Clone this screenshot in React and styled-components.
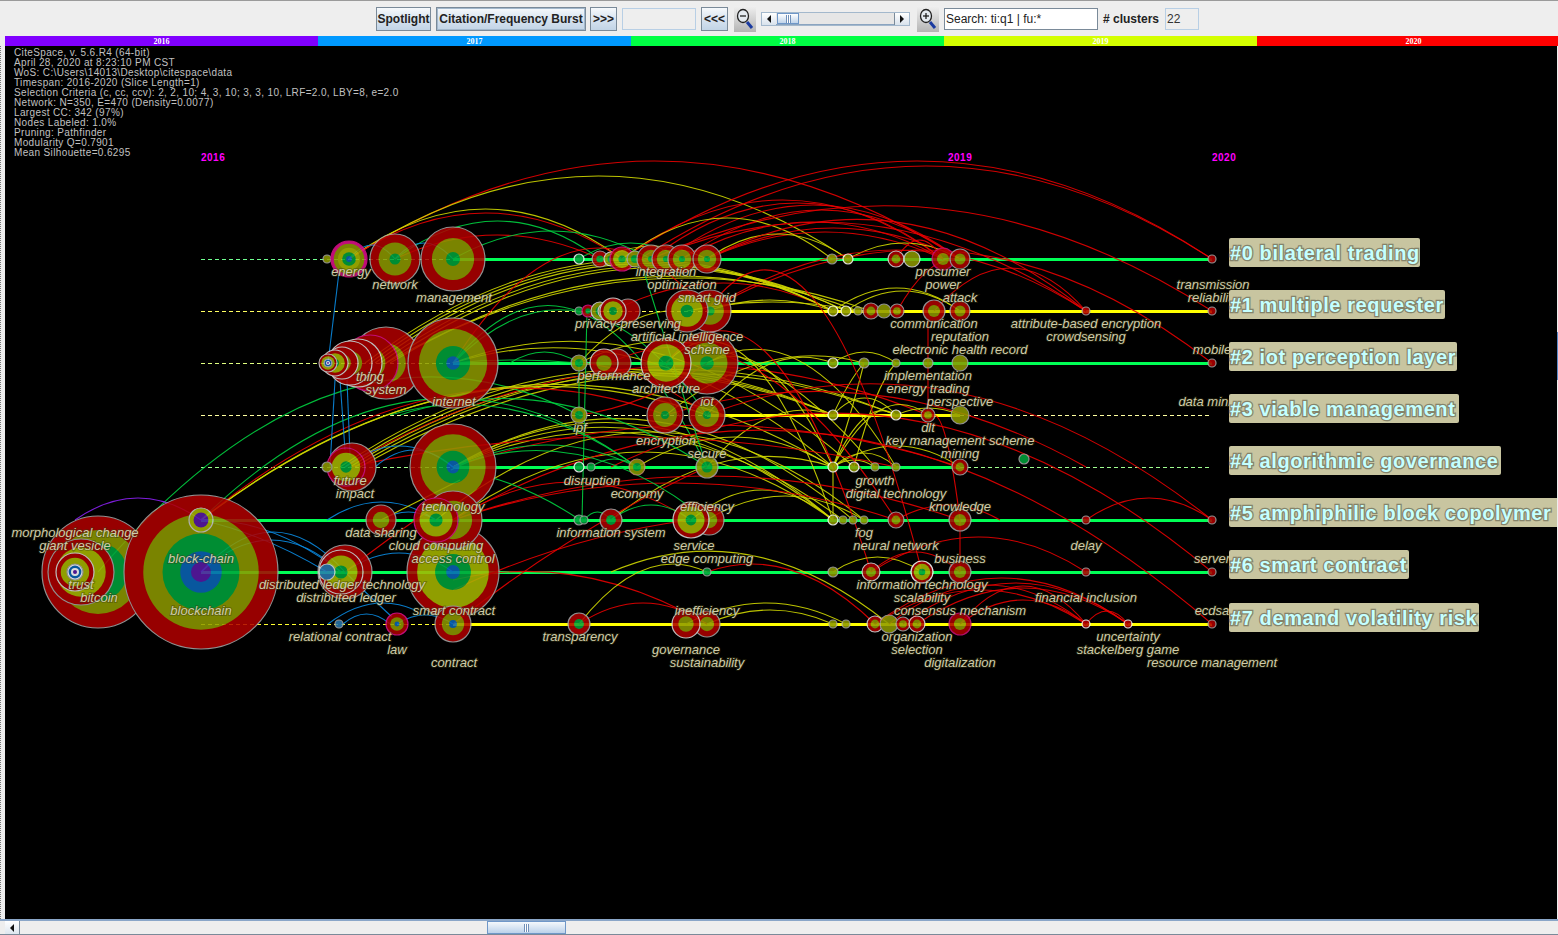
import React from 'react';
import styled, { createGlobalStyle } from 'styled-components';

const R = '#b00000', O = '#8f9a00', Y = '#a8b800', G = '#00a53c', B = '#0a66b8', P = '#5a1aa8', M = '#e0108c';
const RED = '#e80000', YEL = '#d0d800', GRN = '#00d040', BLU = '#0a8ae0';

const RINGS = {
  big: [[1, R], [0.78, Y], [0.39, G], [0.15, B]],
  bigo: [[1, R], [0.76, O], [0.38, G], [0.15, B]],
  rog: [[1, R], [0.66, O], [0.22, G]],
  rob: [[1, R], [0.62, O], [0.22, B]],
  ro: [[1, R], [0.55, O]],
  rg: [[1, R], [0.45, G]],
  ry: [[1, R], [0.75, Y], [0.3, G]],
  tr: [[1, R], [0.75, O], [0.52, G]],
  ol: [[1, O]],
  og: [[1, O], [0.5, G]],
  gr: [[1, G]],
  rd: [[1, R]],
  mag: [[1, M], [0.85, O], [0.62, Y], [0.38, G], [0.16, B]],
  chain: [[1, R], [0.75, O], [0.5, G], [0.27, B], [0.13, P]],
  pur: [[1, Y], [0.62, P]],
  blu: [[1, '#2a7ab0']],
  tiny: [[1, '#fff'], [0.8, B], [0.5, '#fff'], [0.25, P]],
};

// x, y, r, rings, border
const NODES = [
  [98, 572, 56, 'tr'], [81, 572, 33, 'ry'], [75, 572, 19, 'ry', '#ddd'], [75, 572, 8, 'tiny'],
  [201, 572, 77, 'chain'], [201, 520, 12, 'pur', '#ccc'],
  [345, 572, 27, 'ro'], [341, 572, 22, 'ry', '#ddd'], [327, 572, 8, 'blu', '#ddd'],
  [453, 572, 46, 'big'], [707, 572, 4, 'gr'], [833, 572, 5, 'ol'], [871, 572, 9, 'ro', '#ddd'],
  [922, 572, 11, 'ry', '#fff'], [960, 572, 11, 'ro'], [1086, 572, 4, 'rd'], [1212, 572, 4, 'rd'],
  [327, 259, 4, 'ol'], [395, 259, 25, 'rog'], [453, 259, 32, 'rog'], [349, 259, 18, 'mag', M],
  [579, 259, 5, 'gr', '#fff'], [600, 259, 8, 'rg'], [611, 259, 7, 'og', '#ddd'], [622, 259, 12, 'ry', M],
  [635, 259, 8, 'og'], [651, 259, 14, 'rog'], [666, 259, 14, 'rog'], [682, 259, 14, 'rog'], [707, 259, 14, 'rog'],
  [832, 259, 5, 'ol'], [848, 259, 5, 'ol', '#fff'], [896, 259, 8, 'ro', '#ddd'], [912, 259, 8, 'ol', '#ddd'],
  [943, 259, 11, 'ro', '#d0107a'], [960, 259, 10, 'ro'], [1212, 259, 4, 'rd'],
  [579, 311, 4, 'gr'], [588, 311, 6, 'rg', M], [600, 311, 9, 'og', '#ddd'], [606, 311, 8, 'og', '#ddd'],
  [628, 311, 12, 'rd'], [613, 311, 13, 'ry', '#ddd'], [710, 311, 21, 'rog'], [687, 311, 21, 'ry'],
  [833, 311, 5, 'ol', '#fff'], [846, 311, 5, 'ol', '#fff'], [858, 311, 4, 'ol'], [871, 311, 8, 'ro'],
  [884, 311, 7, 'ol'], [897, 311, 7, 'ro'], [934, 311, 11, 'ro'], [960, 311, 10, 'ro'], [1086, 311, 4, 'rd'], [1212, 311, 4, 'rd'],
  [386, 363, 36, 'ro'], [370, 363, 28, 'ro', M], [358, 363, 24, 'ro', '#ddd'], [350, 363, 22, 'ro', '#ddd'],
  [342, 363, 16, 'ro', '#ddd'], [335, 363, 13, 'ry', '#ddd'], [328, 363, 9, 'ry', '#ccc'], [328, 363, 4, 'tiny'],
  [453, 363, 45, 'bigo'], [579, 363, 8, 'og'], [617, 363, 14, 'rd'], [604, 363, 14, 'ro', '#ddd'],
  [707, 363, 31, 'rog'], [666, 363, 25, 'ry', '#ddd'], [833, 363, 5, 'ol', '#fff'], [864, 363, 5, 'ol'],
  [896, 363, 4, 'ol'], [928, 363, 5, 'ol'], [960, 363, 8, 'ol'], [1212, 363, 4, 'rd'],
  [579, 415, 8, 'og'], [665, 415, 18, 'rog'], [707, 415, 18, 'rog'], [833, 415, 5, 'ol', '#fff'],
  [896, 415, 5, 'ol', '#fff'], [928, 415, 7, 'ro'], [960, 415, 9, 'ol'],
  [352, 467, 24, 'ro'], [346, 467, 19, 'ry', M], [327, 467, 5, 'ol'], [453, 467, 43, 'bigo'],
  [579, 467, 5, 'gr', '#fff'], [591, 467, 4, 'gr'], [637, 467, 8, 'og', '#c89070'], [707, 467, 11, 'og'],
  [833, 467, 5, 'ol', '#fff'], [854, 467, 5, 'ol', '#fff'], [875, 467, 4, 'ol'], [896, 467, 4, 'ol'], [960, 467, 8, 'ro'],
  [1024, 459, 5, 'gr'],
  [381, 520, 15, 'ro'], [453, 520, 29, 'rog'], [436, 520, 22, 'ry', M],
  [579, 520, 5, 'gr'], [584, 520, 4, 'gr'], [611, 520, 11, 'rg'], [709, 520, 15, 'ro'], [691, 520, 18, 'ry', '#ddd'],
  [833, 520, 5, 'ol', '#fff'], [843, 520, 4, 'ol'], [853, 520, 4, 'ol'], [864, 520, 4, 'ol'], [896, 520, 8, 'ro'],
  [960, 520, 11, 'ro'], [1086, 520, 4, 'rd'], [1212, 520, 4, 'rd'],
  [339, 624, 4, 'blu'], [397, 624, 11, 'rob', M], [453, 624, 18, 'rob'], [579, 624, 11, 'rg'],
  [707, 624, 13, 'ro'], [686, 624, 14, 'ro', '#ddd'], [833, 624, 4, 'ol'], [846, 624, 4, 'ol'], [875, 624, 8, 'ro', '#ddd'],
  [889, 624, 9, 'ol'], [903, 624, 7, 'ro'], [917, 624, 8, 'ro', '#ddd'], [960, 624, 11, 'ro', '#d0107a'],
  [1086, 624, 4, 'rd', '#fff'], [1128, 624, 4, 'rd', '#fff'], [1212, 624, 4, 'rd'],
];

// from x, from y, to x, to y, peak y, colour
const EDGES = [
  [349, 259, 960, 259, 161, RED], [349, 259, 848, 259, 176, YEL], [622, 259, 1212, 259, 161, RED],
  [640, 259, 1212, 259, 166, RED], [651, 259, 1212, 311, 208, RED], [622, 259, 943, 259, 200, RED],
  [651, 259, 943, 259, 203, RED], [666, 259, 960, 259, 205, RED], [682, 259, 960, 259, 210, RED],
  [707, 259, 960, 259, 228, RED], [707, 259, 943, 259, 232, RED], [682, 259, 943, 259, 222, RED],
  [622, 259, 832, 259, 218, YEL], [707, 259, 848, 259, 234, YEL], [848, 259, 960, 259, 243, YEL],
  [349, 259, 622, 259, 209, YEL], [349, 259, 622, 259, 213, RED], [395, 259, 600, 259, 221, GRN],
  [395, 259, 600, 259, 235, RED], [453, 259, 651, 259, 231, GRN], [349, 259, 395, 259, 245, BLU],
  [395, 259, 453, 259, 243, BLU], [579, 259, 682, 259, 243, GRN], [600, 259, 707, 259, 246, YEL],
  [707, 259, 1086, 311, 222, RED], [651, 259, 1086, 311, 225, RED], [896, 259, 943, 259, 240, RED],
  [707, 311, 1086, 311, 250, RED], [707, 311, 1212, 363, 252, RED], [934, 311, 1086, 311, 268, RED],
  [833, 311, 960, 311, 288, YEL], [846, 311, 960, 311, 291, YEL], [897, 311, 960, 259, 270, RED],
  [707, 311, 833, 311, 300, YEL], [687, 311, 858, 311, 302, YEL], [613, 311, 833, 311, 283, RED],
  [365, 363, 833, 311, 262, YEL], [370, 363, 833, 311, 264, YEL], [375, 363, 833, 311, 266, YEL],
  [380, 363, 846, 311, 268, YEL], [386, 363, 846, 311, 270, YEL], [390, 363, 858, 311, 279, YEL],
  [386, 363, 871, 311, 281, YEL], [453, 363, 707, 311, 250, RED],
  [453, 363, 707, 415, 312, GRN], [510, 363, 579, 363, 352, GRN], [453, 363, 707, 467, 312, GRN],
  [340, 467, 833, 415, 372, YEL], [345, 467, 833, 415, 375, YEL], [350, 467, 833, 415, 378, YEL],
  [355, 467, 896, 415, 372, YEL], [360, 467, 896, 415, 376, YEL], [345, 467, 928, 415, 368, RED],
  [98, 572, 579, 415, 392, GRN], [201, 520, 833, 467, 386, YEL], [201, 520, 666, 415, 398, RED],
  [201, 520, 707, 415, 396, YEL], [201, 520, 637, 467, 400, GRN],
  [453, 467, 833, 520, 425, YEL], [453, 467, 833, 520, 430, YEL], [453, 467, 843, 520, 435, YEL],
  [453, 467, 853, 520, 421, YEL], [436, 520, 864, 520, 432, YEL], [453, 520, 833, 520, 452, YEL],
  [453, 363, 833, 467, 360, YEL], [453, 363, 854, 467, 352, YEL], [579, 363, 875, 467, 352, YEL],
  [707, 363, 896, 467, 362, YEL], [666, 363, 833, 520, 360, YEL], [707, 363, 833, 467, 372, YEL],
  [707, 415, 833, 363, 364, YEL], [666, 415, 864, 363, 362, YEL], [579, 363, 666, 311, 326, YEL],
  [637, 467, 833, 467, 437, YEL], [611, 520, 833, 467, 462, YEL], [707, 467, 833, 415, 417, YEL],
  [691, 520, 833, 520, 490, YEL], [707, 520, 864, 520, 496, YEL], [579, 363, 707, 415, 378, RED],
  [833, 467, 960, 467, 446, YEL], [833, 520, 833, 467, 490, YEL], [833, 467, 896, 415, 418, YEL],
  [833, 467, 928, 415, 410, YEL], [896, 415, 960, 415, 408, YEL], [833, 415, 896, 415, 398, YEL],
  [833, 467, 875, 467, 460, YEL], [833, 467, 896, 467, 453, YEL], [833, 363, 896, 363, 352, YEL],
  [833, 415, 864, 363, 385, YEL], [833, 467, 864, 363, 420, YEL], [854, 467, 896, 363, 400, YEL],
  [707, 415, 1212, 520, 393, RED], [611, 467, 1212, 572, 420, RED], [453, 520, 1212, 624, 435, RED],
  [666, 415, 1086, 467, 395, RED], [453, 467, 960, 467, 425, RED], [579, 415, 707, 363, 398, RED],
  [933, 415, 960, 520, 440, RED], [960, 520, 960, 572, 540, RED], [707, 311, 922, 572, 300, RED],
  [666, 363, 871, 572, 355, RED], [610, 363, 896, 520, 368, RED], [928, 320, 928, 415, 360, RED],
  [349, 467, 896, 467, 437, RED], [453, 520, 960, 520, 476, RED], [453, 520, 896, 520, 483, RED],
  [453, 520, 691, 520, 482, RED], [453, 590, 691, 520, 545, RED], [453, 624, 707, 467, 535, RED],
  [453, 580, 707, 624, 576, RED], [579, 624, 707, 624, 603, RED], [579, 624, 707, 572, 570, YEL],
  [707, 624, 833, 624, 610, YEL], [686, 624, 846, 624, 603, YEL], [611, 572, 889, 624, 555, YEL],
  [707, 572, 875, 624, 570, RED], [875, 624, 1086, 624, 590, RED], [889, 624, 1086, 624, 585, RED],
  [903, 624, 1128, 624, 583, RED], [917, 624, 1128, 624, 588, RED], [875, 624, 1128, 624, 578, RED],
  [960, 624, 1086, 624, 600, RED], [1086, 624, 1128, 624, 611, RED], [1086, 520, 1212, 520, 498, RED],
  [871, 572, 1086, 572, 537, RED], [896, 520, 1000, 520, 505, RED], [833, 572, 922, 572, 557, YEL],
  [871, 572, 960, 572, 552, RED], [960, 624, 1086, 624, 586, RED],
  [451, 470, 637, 467, 445, GRN], [390, 415, 637, 467, 410, GRN], [453, 467, 707, 520, 455, GRN],
  [493, 478, 580, 520, 495, GRN], [591, 467, 637, 467, 459, GRN], [584, 520, 611, 520, 512, GRN],
  [611, 520, 691, 520, 505, GRN], [400, 415, 707, 467, 403, GRN], [453, 363, 579, 363, 360, GRN],
  [587, 311, 582, 520, 415, GRN], [640, 259, 707, 467, 365, GRN], [579, 415, 579, 363, 389, GRN],
  [75, 520, 201, 520, 498, '#8a20f0'],
  [339, 272, 328, 363, 318, BLU], [335, 380, 330, 467, 423, BLU], [340, 380, 345, 450, 415, BLU],
  [347, 380, 350, 455, 417, BLU], [201, 572, 345, 572, 532, BLU], [201, 520, 327, 572, 540, BLU],
  [201, 572, 341, 572, 540, BLU], [201, 520, 341, 572, 532, BLU], [327, 520, 436, 520, 502, BLU],
  [381, 520, 436, 520, 512, BLU], [345, 467, 453, 467, 446, BLU], [375, 467, 453, 467, 450, BLU],
  [345, 572, 453, 572, 553, BLU], [328, 624, 415, 610, 604, BLU], [343, 624, 390, 624, 614, BLU],
  [345, 572, 392, 617, 595, BLU], [397, 624, 453, 624, 615, BLU],
  [381, 520, 460, 480, 500, YEL], [345, 572, 430, 510, 540, RED],
];

const ROWS = [
  { y: 259, color: '#00ff55', from: 453, to: 1212, dash: '#70ff90' },
  { y: 311, color: '#ffff00', from: 707, to: 1212, dash: '#ffff60' },
  { y: 363, color: '#00ff55', from: 453, to: 1212, dash: '#e0ff80' },
  { y: 415, color: '#ffff00', from: 707, to: 960, dash: '#ffffa0' },
  { y: 467, color: '#00ff55', from: 453, to: 960, dash: '#a0ff90' },
  { y: 520, color: '#00ff55', from: 201, to: 1212, dash: '#a0ff90' },
  { y: 572, color: '#00ff55', from: 201, to: 1212, dash: '#a0ff90' },
  { y: 624, color: '#ffff00', from: 453, to: 1212, dash: '#ffff30' },
];

const LABELS = [
  ['energy', 351, 276], ['network', 395, 289], ['management', 454, 302], ['integration', 666, 276], ['optimization', 682, 289],
  ['smart grid', 707, 302], ['prosumer', 943, 276], ['power', 943, 289], ['attack', 960, 302], ['transmission', 1213, 289],
  ['reliability', 1213, 302], ['privacy-preserving', 628, 328], ['artificial intelligence', 687, 341], ['scheme', 707, 354],
  ['communication', 934, 328], ['reputation', 960, 341], ['electronic health record', 960, 354],
  ['attribute-based encryption', 1086, 328], ['crowdsensing', 1086, 341], ['mobile', 1212, 354],
  ['thing', 370, 381], ['system', 386, 394], ['internet', 454, 406], ['performance', 614, 380], ['architecture', 666, 393],
  ['iot', 707, 406], ['implementation', 928, 380], ['energy trading', 928, 393], ['perspective', 960, 406], ['data mining', 1212, 406],
  ['ipf', 580, 432], ['encryption', 666, 445], ['secure', 707, 458], ['dlt', 928, 432], ['key management scheme', 960, 445], ['mining', 960, 458],
  ['future', 350, 485], ['impact', 355, 498], ['disruption', 592, 485], ['economy', 637, 498], ['growth', 875, 485],
  ['digital technology', 896, 498], ['technology', 453, 511], ['efficiency', 707, 511], ['knowledge', 960, 511],
  ['morphological change', 75, 537], ['giant vesicle', 75, 550], ['data sharing', 381, 537], ['cloud computing', 436, 550],
  ['information system', 611, 537], ['service', 694, 550], ['fog', 864, 537], ['neural network', 896, 550], ['delay', 1086, 550],
  ['block-chain', 201, 563], ['access control', 453, 563], ['edge computing', 707, 563], ['business', 960, 563], ['server', 1212, 563],
  ['trust', 81, 589], ['distributed ledger technology', 342, 589], ['information technology', 922, 589],
  ['bitcoin', 99, 602], ['distributed ledger', 346, 602], ['scalability', 922, 602], ['financial inclusion', 1086, 602],
  ['blockchain', 201, 615], ['smart contract', 454, 615], ['inefficiency', 707, 615], ['consensus mechanism', 960, 615], ['ecdsa', 1212, 615],
  ['relational contract', 340, 641], ['transparency', 580, 641], ['organization', 917, 641], ['uncertainty', 1128, 641],
  ['law', 397, 654], ['governance', 686, 654], ['selection', 917, 654], ['stackelberg game', 1128, 654],
  ['contract', 454, 667], ['sustainability', 707, 667], ['digitalization', 960, 667], ['resource management', 1212, 667],
];

const CLUSTERS = [
  ['#0 bilateral trading', 238, 191], ['#1 multiple requester', 290, 216], ['#2 iot perception layer', 342, 228],
  ['#3 viable management', 394, 230], ['#4 algorithmic governance', 446, 272], ['#5 amphiphilic block copolymer', 498, 340],
  ['#6 smart contract', 550, 180], ['#7 demand volatility risk', 603, 250],
];

const YEARS = [['2016', '#8000ff'], ['2017', '#0099ff'], ['2018', '#00ff44'], ['2019', '#d4ff00'], ['2020', '#ff0000']];

const INFO = [
  'CiteSpace, v. 5.6.R4 (64-bit)',
  'April 28, 2020 at 8:23:10 PM CST',
  'WoS: C:\\Users\\14013\\Desktop\\citespace\\data',
  'Timespan: 2016-2020 (Slice Length=1)',
  'Selection Criteria (c, cc, ccv): 2, 2, 10; 4, 3, 10; 3, 3, 10, LRF=2.0, LBY=8, e=2.0',
  'Network: N=350, E=470 (Density=0.0077)',
  'Largest CC: 342 (97%)',
  'Nodes Labeled: 1.0%',
  'Pruning: Pathfinder',
  'Modularity Q=0.7901',
  'Mean Silhouette=0.6295',
];

const GlobalStyle = createGlobalStyle`
  html, body { margin: 0; height: 100%; overflow: hidden; background: #eeeeee; }
  #root { height: 100%; }
`;

const Page = styled.div`
  height: 100vh;
  display: flex;
  flex-direction: column;
  font-family: 'Liberation Sans', Arial, sans-serif;
  background: #eeeeee;
`;

const Toolbar = styled.div`
  height: 36px;
  box-sizing: border-box;
  border-top: 1px solid #9a9a9a;
  padding: 6px 0 5px 376px;
  display: flex;
  align-items: center;
  background: #eeeeee;
`;

const Button = styled.div`
  height: 24px;
  box-sizing: border-box;
  width: ${(p) => p.$w}px;
  margin-left: ${(p) => p.$ml || 0}px;
  border: 1px solid #7a8a99;
  background: linear-gradient(#f6f9fc, #d5e2ef 55%, #c2d4e6);
  box-shadow: inset 0 0 0 ${(p) => (p.$focus ? 1 : 0)}px #a3b8cc;
  display: flex;
  align-items: center;
  justify-content: center;
  font-size: 12px;
  font-weight: bold;
  color: #222;
  white-space: nowrap;
`;

const BlankField = styled.div`
  width: 74px;
  height: 22px;
  margin-left: 5px;
  box-sizing: border-box;
  border: 1px solid #b8cfe5;
  background: #eeeeee;
`;

const IconButton = styled.div`
  width: 22px;
  height: 26px;
  margin-left: ${(p) => p.$ml}px;
  background: linear-gradient(#f0f0f0, #b4b4b4);
  display: flex;
  align-items: center;
  justify-content: center;
`;

const Slider = styled.div`
  width: 149px;
  height: 14px;
  margin-left: 5px;
  box-sizing: border-box;
  border: 1px solid #a3b8cc;
  display: flex;
  background: #eeeeee;
`;

const SliderArrow = styled.div`
  width: 14px;
  display: flex;
  align-items: center;
  justify-content: center;
  background: linear-gradient(#ffffff, #d8e2ec);
  border-left: ${(p) => (p.$end ? '1px solid #7a8a99' : 'none')};
`;

const Triangle = styled.span`
  width: 0;
  height: 0;
  border-top: 4px solid transparent;
  border-bottom: 4px solid transparent;
  ${(p) => (p.$right ? 'border-left: 4px solid #111;' : 'border-right: 4px solid #111;')}
`;

const SliderTrack = styled.div`
  flex: 1;
  padding-left: 1px;
  background: #e6e6e6;
  border-bottom: 1px solid #8aa4c0;
`;

const SliderThumb = styled.div`
  width: 22px;
  height: 100%;
  box-sizing: border-box;
  border: 1px solid #6f97c8;
  background: linear-gradient(#ffffff, #c0d4ea);
  display: flex;
  align-items: center;
  justify-content: center;
`;

const Grip = styled.span`
  width: 5px;
  height: 8px;
  background: repeating-linear-gradient(90deg, #6f8fb8 0 1px, #ffffff 1px 2px);
`;

const SearchBox = styled.div`
  width: 154px;
  height: 22px;
  margin-left: 5px;
  box-sizing: border-box;
  border: 1px solid #7a8a99;
  background: #ffffff;
  padding-left: 1px;
  font-size: 12px;
  line-height: 20px;
  color: #222;
`;

const ClusterCaption = styled.span`
  margin-left: 5px;
  font-size: 12px;
  font-weight: bold;
  color: #222;
`;

const ClusterCount = styled.div`
  width: 34px;
  height: 22px;
  margin-left: 6px;
  box-sizing: border-box;
  border: 1px solid #b8cfe5;
  padding-left: 1px;
  font-size: 12px;
  line-height: 20px;
  color: #333;
`;

const TimeBar = styled.div`
  height: 10px;
  margin-left: 5px;
  display: flex;
  overflow: hidden;
`;

const YearCell = styled.div`
  width: 313px;
  flex: none;
  background: ${(p) => p.$color};
  color: #ffffff;
  font: bold 8px/12px 'Liberation Serif', serif;
  text-align: center;
  overflow: hidden;
`;

const Middle = styled.div`
  flex: 1;
  display: flex;
  min-height: 0;
`;

const LeftEdge = styled.div`
  width: 5px;
  flex: none;
  box-sizing: border-box;
  border-left: 1px dotted #777;
  background: #eeeeee;
`;

const Canvas = styled.div`
  flex: 1;
  position: relative;
  background: #000000;
  overflow: hidden;
`;

const RightEdge = styled.div`
  width: 1px;
  flex: none;
  position: relative;
  background: #eeeeee;
`;

const EdgeMark = styled.span`
  position: absolute;
  left: 0;
  top: 286px;
  width: 1px;
  height: 48px;
  background: #5a8ac8;
`;

const InfoPanel = styled.div`
  position: absolute;
  left: 9px;
  top: 2px;
  font-size: 10px;
  line-height: 10px;
  letter-spacing: 0.36px;
  color: #c0c0c0;
  white-space: nowrap;
`;

const Chart = styled.svg`
  display: block;
  width: 100%;
  height: 100%;
`;

const YearMark = styled.text`
  font: bold 10px 'Liberation Sans', sans-serif;
  letter-spacing: 0.5px;
  fill: #ff00ff;
`;

const EdgeLine = styled.path`
  fill: none;
  stroke: ${(p) => p.$color};
  stroke-width: 1.1;
  stroke-opacity: 0.9;
`;

const RowLine = styled.line`
  stroke: ${(p) => p.$color};
  stroke-width: ${(p) => (p.$dashed ? 1 : 3)};
  stroke-dasharray: ${(p) => (p.$dashed ? '4 3' : 'none')};
`;

const NodeGroup = styled.g`
  opacity: 0.86;
`;

const Ring = styled.circle`
  fill: ${(p) => p.$color};
  stroke: ${(p) => p.$border || 'none'};
  stroke-width: ${(p) => (p.$border ? 1.2 : 0)};
`;

const TermLabel = styled.text`
  font: italic 13px 'Liberation Sans', sans-serif;
  text-anchor: middle;
  fill: #cfccaa;
  stroke: rgba(60, 60, 20, 0.4);
  stroke-width: 2px;
  paint-order: stroke;
`;

const ClusterBox = styled.rect`
  fill: #c8c5a0;
`;

const ClusterName = styled.text`
  font: bold 20px 'Liberation Sans', sans-serif;
  letter-spacing: 0.6px;
  fill: #c4ffff;
  stroke: #85836a;
  stroke-width: 2.5px;
  paint-order: stroke;
`;

const ScrollBar = styled.div`
  height: 16px;
  box-sizing: border-box;
  border-top: 2px solid #8aa6c8;
  border-bottom: 1px solid #7a8a99;
  padding-left: 5px;
  display: flex;
  background: #eeeeee;
`;

const ScrollArrow = styled.div`
  width: 15px;
  display: flex;
  align-items: center;
  justify-content: center;
  box-sizing: border-box;
  border-right: 1px solid #7a8a99;
  background: linear-gradient(#ffffff, #dde6ef);
`;

const ScrollThumb = styled.div`
  width: 79px;
  margin-left: 467px;
  box-sizing: border-box;
  border: 1px solid #6f97c8;
  background: linear-gradient(#f4f8fc, #bcd2ea);
  display: flex;
  align-items: center;
  justify-content: center;
`;

const arcPath = ([x1, y1, x2, y2, peak]) => {
  const cy = 2 * peak - (y1 + y2) / 2;
  return `M${x1} ${y1} Q${(x1 + x2) / 2} ${cy} ${x2} ${y2}`;
};

const ZoomIcon = ({ plus }) => (
  <svg width="20" height="24" viewBox="0 0 20 24">
    <ellipse cx="8" cy="9" rx="5.5" ry="6.5" fill="#e4eaf0" stroke="#222" strokeWidth="1.3" />
    <line x1="5" y1="9" x2="11" y2="9" stroke="#111" strokeWidth="1.2" />
    {plus && <line x1="8" y1="6" x2="8" y2="12" stroke="#111" strokeWidth="1.2" />}
    <line x1="12" y1="15" x2="17" y2="21" stroke="#1a3aa0" strokeWidth="3" />
  </svg>
);

const Node = ({ node }) => {
  const [x, y, r, rings, border] = node;
  return (
    <g>
      {RINGS[rings].map(([f, color], i) => (
        <Ring key={i} cx={x} cy={y} r={r * f} $color={color} $border={i === 0 ? border || '#a8a8a8' : undefined} />
      ))}
    </g>
  );
};

export default function App() {
  return (
    <Page>
      <GlobalStyle />
      <Toolbar>
        <Button $w={55}>Spotlight</Button>
        <Button $w={150} $ml={5} $focus>Citation/Frequency Burst</Button>
        <Button $w={27} $ml={4}>&gt;&gt;&gt;</Button>
        <BlankField />
        <Button $w={27} $ml={5}>&lt;&lt;&lt;</Button>
        <IconButton $ml={6}><ZoomIcon /></IconButton>
        <Slider>
          <SliderArrow><Triangle /></SliderArrow>
          <SliderTrack>
            <SliderThumb><Grip /></SliderThumb>
          </SliderTrack>
          <SliderArrow $end><Triangle $right /></SliderArrow>
        </Slider>
        <IconButton $ml={7}><ZoomIcon plus /></IconButton>
        <SearchBox>Search: ti:q1 | fu:*</SearchBox>
        <ClusterCaption># clusters</ClusterCaption>
        <ClusterCount>22</ClusterCount>
      </Toolbar>
      <TimeBar>
        {YEARS.map(([year, color]) => (
          <YearCell key={year} $color={color}>{year}</YearCell>
        ))}
      </TimeBar>
      <Middle>
        <LeftEdge />
        <Canvas>
          <Chart viewBox="5 46 1552 873">
            <YearMark x={201} y={161}>2016</YearMark>
            <YearMark x={948} y={161}>2019</YearMark>
            <YearMark x={1212} y={161}>2020</YearMark>
            {ROWS.map((row) => (
              <g key={row.y}>
                <RowLine x1={201} x2={row.from} y1={row.y + 0.5} y2={row.y + 0.5} $color={row.dash} $dashed />
                <RowLine x1={row.from} x2={row.to} y1={row.y + 0.5} y2={row.y + 0.5} $color={row.color} />
                {row.to < 1212 && (
                  <RowLine x1={row.to} x2={1212} y1={row.y + 0.5} y2={row.y + 0.5} $color={row.dash} $dashed />
                )}
              </g>
            ))}
            {EDGES.map((edge, i) => (
              <EdgeLine key={i} d={arcPath(edge)} $color={edge[5]} />
            ))}
            <NodeGroup>
              {NODES.map((node, i) => (
                <Node key={i} node={node} />
              ))}
            </NodeGroup>
            {LABELS.map(([text, x, y]) => (
              <TermLabel key={text} x={x} y={y}>{text}</TermLabel>
            ))}
            {CLUSTERS.map(([text, y, w]) => (
              <g key={text}>
                <ClusterBox x={1229} y={y} width={w} height={29} rx={2} />
                <ClusterName x={1230} y={y + 22}>{text}</ClusterName>
              </g>
            ))}
          </Chart>
          <InfoPanel>
            {INFO.map((line) => (
              <div key={line}>{line}</div>
            ))}
          </InfoPanel>
        </Canvas>
        <RightEdge><EdgeMark /></RightEdge>
      </Middle>
      <ScrollBar>
        <ScrollArrow><Triangle /></ScrollArrow>
        <ScrollThumb><Grip /></ScrollThumb>
      </ScrollBar>
    </Page>
  );
}
